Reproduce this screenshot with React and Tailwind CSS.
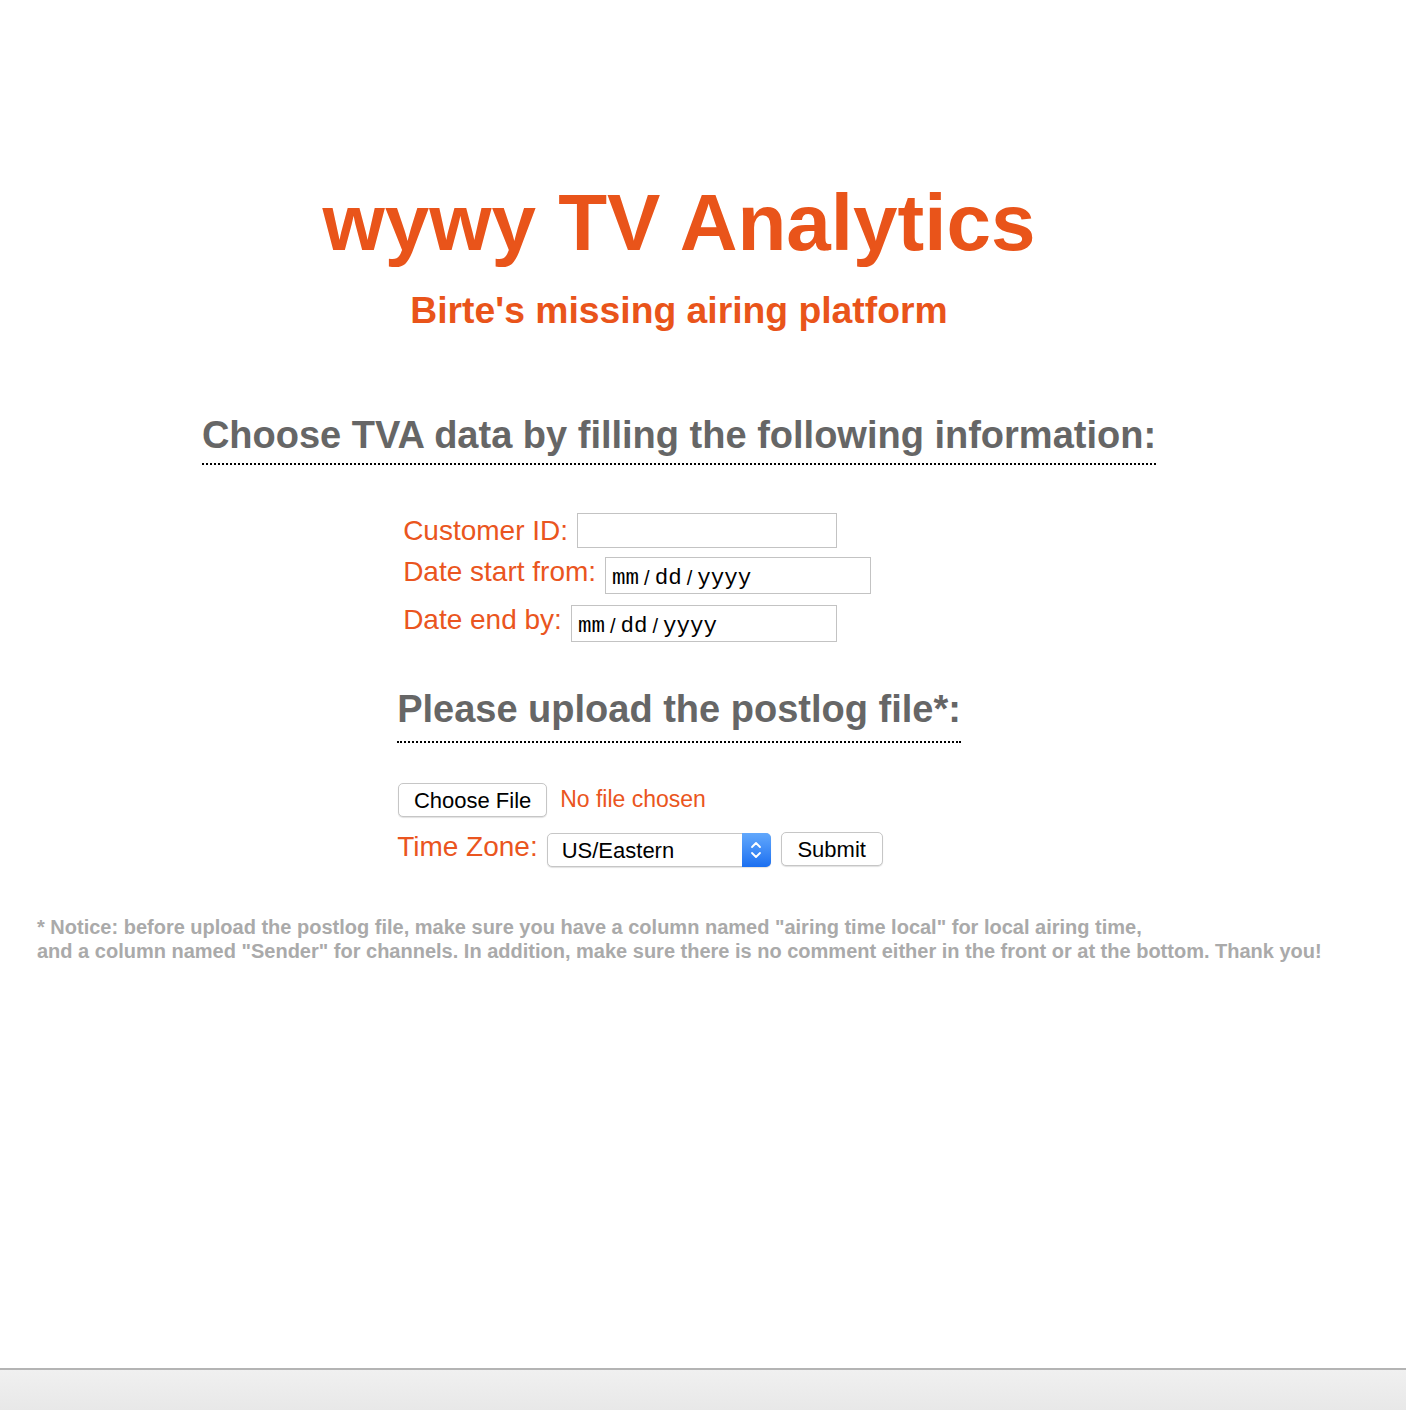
import { useState } from 'react';

const FONT = { fontFamily: '"Liberation Sans", Arial, Helvetica, sans-serif' };
const MONO = { fontFamily: '"Liberation Mono", "Courier New", monospace' };

const DateBox = ({ widthClass }) => (
    <div className={`flex items-center h-[37px] ${widthClass} border border-[#c3c3c3] bg-white pl-[6px] pt-[4px] text-black`}>
        <span className="text-[22.5px] leading-none" style={MONO}>mm</span>
        <span className="text-[20px] leading-none mx-[5px]">/</span>
        <span className="text-[22.5px] leading-none" style={MONO}>dd</span>
        <span className="text-[20px] leading-none mx-[5px]">/</span>
        <span className="text-[22.5px] leading-none" style={MONO}>yyyy</span>
    </div>
);

const App = () => {
    const [customerId, setCustomerId] = useState('');
    const [timeZone, setTimeZone] = useState('US/Eastern');

    return (
        <div className="min-h-screen flex flex-col bg-white" style={FONT}>
            <main className="flex-1 flex flex-col">
                {/* header block, centred a little left of the window centre */}
                <div className="flex flex-col items-center mr-[48px] pt-[183px]">
                    <h1 className="text-[80px] leading-none font-bold text-[#e9541a]">wywy TV Analytics</h1>
                    <h2 className="mt-[29px] text-[37.3px] leading-none font-bold text-[#e9541a]">Birte's missing airing platform</h2>

                    <h3 className="mt-[87px] text-[38px] leading-none font-bold text-[#666666] pb-[9px] border-b-2 border-dotted border-black">
                        Choose TVA data by filling the following information:
                    </h3>

                    <form className="flex flex-col items-start mt-[48px]" onSubmit={(e) => e.preventDefault()}>
                        <div className="flex flex-col pl-[6px]">
                            <div className="flex items-center gap-[9px] h-[35px]">
                                <label className="text-[28px] leading-none text-[#ea5520]">Customer ID:</label>
                                <input
                                    type="text"
                                    value={customerId}
                                    onChange={(e) => setCustomerId(e.target.value)}
                                    className="h-[35px] w-[260px] border border-[#c3c3c3] px-2 text-[20px] outline-none"
                                />
                            </div>
                            <div className="flex items-center gap-[9px] mt-[9px]">
                                <label className="text-[28px] leading-none text-[#ea5520] mb-2">Date start from:</label>
                                <DateBox widthClass="w-[266px]" />
                            </div>
                            <div className="flex items-center gap-[9px] mt-[11px]">
                                <label className="text-[28px] leading-none text-[#ea5520] mb-2">Date end by:</label>
                                <DateBox widthClass="w-[266px]" />
                            </div>
                        </div>

                        <h3 className="mt-[48px] text-[38px] leading-none font-bold text-[#666666] pb-[13px] border-b-2 border-dotted border-black">
                            Please upload the postlog file*:
                        </h3>

                        <div className="flex items-center mt-[39px] pl-px">
                            <button type="button" className="h-[34px] w-[149px] rounded-[5px] border border-[#c6c6c6] bg-white text-[22px] text-black shadow-[0_1px_1px_rgba(0,0,0,0.12)]">
                                Choose File
                            </button>
                            <span className="ml-[13px] text-[23px] text-[#ea5520]">No file chosen</span>
                        </div>

                        <div className="flex items-center mt-[16px]">
                            <label className="text-[28px] leading-none text-[#ea5520] mb-[6px]">Time Zone:</label>
                            <div className="relative ml-[9px] h-[34px] w-[224px]">
                                <select
                                    value={timeZone}
                                    onChange={(e) => setTimeZone(e.target.value)}
                                    className="appearance-none h-full w-full rounded-[5px] border border-[#c6c6c6] bg-white pl-[14px] text-[22px] text-black shadow-[0_1px_1px_rgba(0,0,0,0.12)] outline-none"
                                >
                                    <option>US/Eastern</option>
                                    <option>US/Central</option>
                                    <option>US/Mountain</option>
                                    <option>US/Pacific</option>
                                    <option>Europe/Berlin</option>
                                </select>
                                {/* blue stepper on the right side of the select */}
                                <div className="pointer-events-none absolute right-0 top-0 h-full w-[29px] rounded-r-[5px] bg-linear-to-b from-[#62a8fc] to-[#1a6ff0] flex items-center justify-center">
                                    <svg width="12" height="22" viewBox="0 0 12 22" fill="none" stroke="white" strokeWidth="1.8" strokeLinecap="round" strokeLinejoin="round">
                                        <path d="M2 8 L6 4 L10 8" />
                                        <path d="M2 14 L6 18 L10 14" />
                                    </svg>
                                </div>
                            </div>
                            <button type="submit" className="ml-[10px] h-[34px] w-[102px] rounded-[5px] border border-[#c6c6c6] bg-white text-[22px] text-black shadow-[0_1px_1px_rgba(0,0,0,0.12)] -mt-[2px]">
                                Submit
                            </button>
                        </div>
                    </form>
                </div>

                <p className="mt-[48px] ml-[37px] text-[20px] leading-[24px] font-bold text-[#aaaaaa]">
                    * Notice: before upload the postlog file, make sure you have a column named "airing time local" for local airing time,
                    <br />
                    and a column named "Sender" for channels. In addition, make sure there is no comment either in the front or at the bottom. Thank you!
                </p>
            </main>

            <footer className="h-[42px] border-t-2 border-[#b4b4b4] bg-linear-to-b from-[#f0f0f0] to-[#e8e8e8]"></footer>
        </div>
    );
};

export default App;
